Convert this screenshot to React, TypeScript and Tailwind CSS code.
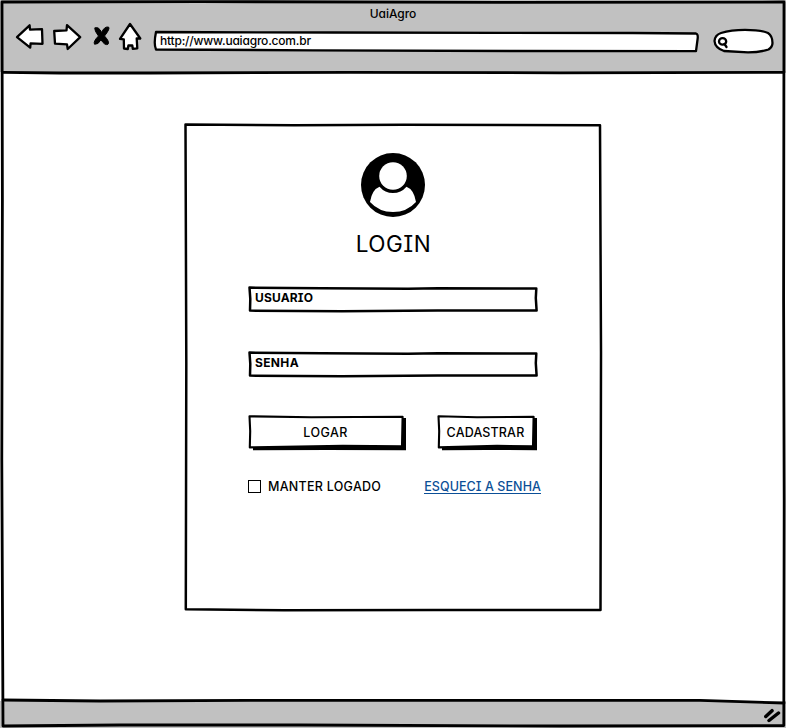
import type { ReactNode } from "react";

type SketchProps = { w: number; h: number; children: ReactNode };

/* Hand-drawn outline that fills the box it decorates. */
function Sketch({ w, h, children }: SketchProps) {
  return (
    <svg
      className="pointer-events-none absolute left-0 top-0 overflow-visible"
      width={w}
      height={h}
      viewBox={`0 0 ${w} ${h}`}
      fill="none"
      stroke="#000"
      strokeWidth="2.5"
      strokeLinejoin="round"
      strokeLinecap="round"
      aria-hidden="true"
    >
      {children}
    </svg>
  );
}

function NavIcons() {
  return (
    <svg className="shrink-0" width="130" height="30" viewBox="14 22 130 30" fill="#fff" stroke="#000" strokeWidth="2.3" strokeLinejoin="round" strokeLinecap="round">
      <path d="M17 37.2 L29.6 25.3 L30 29.6 L42 29.2 L42.5 43.8 L30.6 43.4 L30.2 47.7 Z" />
      <path d="M54.2 31 L66.5 30.4 L67 25.2 L80.2 37.2 L67.7 49 L67 44.3 L55 43.6 Z" />
      <path fill="#000" strokeWidth="1" d="M95 28 Q98.5 26 101.7 32.5 Q104 26.5 108.5 27 Q110.5 28.5 104.5 36 Q110 42 108 44.2 Q105 46 101 39.8 Q98 45 94.5 44.2 Q93 41.5 98.5 36 Q94 30 95 28 Z" />
      <path d="M130 24 L140.3 38.5 L136.7 38.5 L137.3 48.4 L132.8 48.8 L132.3 45.5 L128.4 45.5 L127.8 49 L124 48.5 L123.8 39.3 L120 38.8 Z" />
    </svg>
  );
}

function Field({ label, spacing }: { label: string; spacing: string }) {
  return (
    <label className={`relative flex h-[26px] w-[290px] items-center pl-[7px] text-[12px] font-bold leading-[16px] ${spacing}`}>
      <Sketch w={290} h={26}>
        <path d="M1.5 1.6 L74 2.2 L160 2.8 L190 2.2 L288.3 2.6 L287.8 12 L288.6 24.6 L190 24.4 L94 25.2 L2 24.6 L2.3 13 Z" />
      </Sketch>
      <span className="relative -top-[1px]">{label}</span>
    </label>
  );
}

function SketchButton({ label, wide }: { label: string; wide?: boolean }) {
  const w = wide ? 158 : 100;
  return (
    <button className={`relative flex h-[36px] items-center justify-center text-[12.5px] font-medium leading-[16px] ${wide ? "w-[158px] tracking-[0.45px]" : "w-[100px] tracking-[0.15px]"}`}>
      <Sketch w={w} h={36}>
        <path d={`M5 3 H${w} V35.2 L${w / 2} 35 L5 35.2 Z`} fill="#000" stroke="none" />
        <path d={`M1.5 1.3 L${w * 0.4} 2.2 L${w - 3.4} 1.8 L${w - 4} 31.2 L${w * 0.6} 30.9 L1.8 32.4 L2.2 16 Z`} fill="#fff" strokeWidth="2.1" />
      </Sketch>
      <span className="relative -left-[1.5px]">{label}</span>
    </button>
  );
}

export default function App() {
  return (
    <div className="relative flex h-[728px] w-[786px] flex-col bg-white font-['Inter','Noto_Sans',sans-serif] text-black [font-feature-settings:'cv11','cv08']">
      <header className="h-[72px] bg-[#c1c1c1]">
        <div className="flex h-[22px] items-center justify-center pt-[5px] text-[12px] font-medium leading-[16px] tracking-[-0.05px]">UaiAgro</div>
        <div className="flex h-[30px] pl-[14px]">
          <NavIcons />
          <div className="relative ml-[9px] mt-[9px] flex h-[20px] w-[546px] items-center pl-[7px] text-[12px] font-medium leading-[16px] tracking-[-0.2px]">
            <Sketch w={546} h={20}>
              <path fill="#fff" strokeWidth="2.3" d="M3 1 L180 1.5 L350 1.8 L480 2 L543 2.5 Q545.3 3 544.6 8 Q543.8 14 543 20.2 L360 20 L160 19.3 L3 18.5 Q.5 13 3 1 Z" />
            </Sketch>
            <span className="relative">http://www.uaiagro.com.br</span>
          </div>
          <svg className="ml-[13px] mt-[6px] shrink-0" width="62" height="26" viewBox="712 28 62 26" fill="#fff" stroke="#000" strokeWidth="2.3" strokeLinecap="round">
            <path d="M721 33 Q731 29.8 745 29.8 Q761 29.8 768 33 Q772.5 36 772.5 43 Q772.5 47 768.5 49.5 Q760 52.3 748 52.3 L724 51 Q715 48 714.5 41 Q715 35 721 33 Z" />
            <ellipse cx="722.6" cy="41.4" rx="3.6" ry="3.3" />
            <path d="M724.5 44 L726.5 47" />
          </svg>
        </div>
      </header>

      <main className="flex h-[629px] justify-center pt-[51px]">
        <section className="relative flex h-[488px] w-[418px] flex-col items-center">
          <Sketch w={418} h={488}>
            <path d="M1.5 1.5 L110 2.3 L220 1.8 L416 2.2 L417 230 L416.5 487 L250 487 L100 487.2 L1.8 486.2 L2.3 240 Z" />
          </Sketch>
          <svg className="mt-[29px] shrink-0" width="66" height="66" viewBox="0 0 66 66">
            <circle cx="33" cy="33" r="32" fill="#000" />
            <path fill="#fff" d="M19.5 34.7 Q25 41 33 41 Q41 41 46.5 34.7 Q54 37.5 56 50 Q47 60 33 60 Q19 60 10 50 Q12 37.5 19.5 34.7 Z" />
            <circle cx="33" cy="24" r="13.8" fill="#fff" />
          </svg>
          <h1 className="mt-[10px] pl-[1px] text-[22.5px] leading-[32px] tracking-[0.5px]">LOGIN</h1>
          <form className="ml-[2px] mt-[26px] flex w-[292px] flex-col">
            <Field label="USUARIO" spacing="tracking-[0.15px]" />
            <div className="mt-[39px]"><Field label="SENHA" spacing="tracking-[0.35px]" /></div>
            <div className="mt-[38px] flex w-[289px] justify-between">
              <SketchButton label="LOGAR" wide />
              <SketchButton label="CADASTRAR" />
            </div>
            <div className="mt-[25px] flex h-[18px] w-[293px] items-center justify-between text-[12.5px] leading-[16px]">
              <label className="flex items-center gap-[7px] pt-[3px] font-medium tracking-[0.27px]">
                <span className="h-[13px] w-[13px] border border-black bg-white" />
                <span>MANTER LOGADO</span>
              </label>
              <a className="border-b border-[#0b4f97] pt-[3px] font-medium leading-[13px] tracking-[0.08px] text-[#0b4f97]">ESQUECI A SENHA</a>
            </div>
          </form>
        </section>
      </main>

      <footer className="flex h-[27px] items-end justify-end bg-[#c1c1c1] pb-[5px] pr-[5px]">
        <svg width="17" height="15" viewBox="0 0 17 15" fill="none" stroke="#000" strokeWidth="3.5" strokeLinecap="round">
          <path d="M1.8 8.5 L8 2.7 M5 12.5 L14.5 5" />
        </svg>
      </footer>

      <Sketch w={786} h={728}>
        <path fill="#fff" stroke="none" d="M700 700 L784 703 V700 Z" />
        <path strokeWidth="2.8" d="M2 2 L200 1.6 L500 2.4 L784 2 L783.6 300 L784.2 500 L783.8 725.5 L560 726 L300 725 L120 725 L3 726 L1.8 460 L2.4 200 Z" />
        <path strokeWidth="2.8" d="M3 72.3 L60 73 L150 73 L350 72.3 L560 72.8 L784 72.3" />
        <path strokeWidth="2.8" d="M3 700 L100 701 L250 700.3 L700 700.3 L784 703" />
      </Sketch>
    </div>
  );
}
